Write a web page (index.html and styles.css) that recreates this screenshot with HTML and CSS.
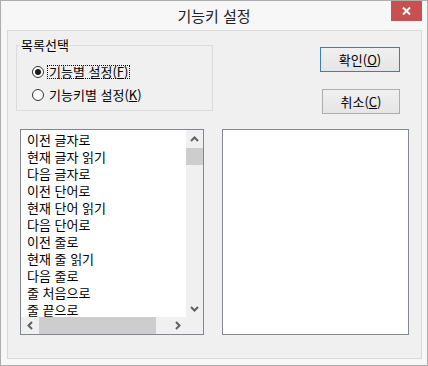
FILE: index.html
```html
<!DOCTYPE html>
<html lang="ko">
  <head>
    <meta charset="UTF-8" />
    <title>기능키 설정</title>
    <link rel="stylesheet" href="styles.css">
  </head>
  <body>
    <div class="window">
      <div class="titlebar">
        <span></span>
        <span class="title">기능키 설정</span>
        <button class="close">
          <svg width="9" height="8" viewBox="0 0 9 8">
            <path d="M1 0.5L8 7.5M8 0.5L1 7.5" stroke="#fff" stroke-width="2" />
          </svg>
        </button>
      </div>
      <div class="panel">
        <div class="top-row">
          <fieldset class="group">
            <legend>목록선택</legend>
            <label class="option">
              <span class="radio checked"></span>
              <span class="option-text focused">기능별 설정(<u>F</u>)</span>
            </label>
            <label class="option">
              <span class="radio"></span>
              <span class="option-text">기능키별 설정(<u>K</u>)</span>
            </label>
          </fieldset>
          <div class="buttons">
            <button class="btn default">확인(<u>O</u>)</button>
            <button class="btn cancel">취소(<u>C</u>)</button>
          </div>
        </div>
        <div class="bottom-row">
          <div class="listbox">
            <ul class="items">
              <li>이전 글자로</li>
              <li>현재 글자 읽기</li>
              <li>다음 글자로</li>
              <li>이전 단어로</li>
              <li>현재 단어 읽기</li>
              <li>다음 단어로</li>
              <li>이전 줄로</li>
              <li>현재 줄 읽기</li>
              <li>다음 줄로</li>
              <li>줄 처음으로</li>
              <li>줄 끝으로</li>
            </ul>
            <div class="vscroll">
              <span class="arrow">
                <svg width="9" height="6" viewBox="0 0 9 6">
                  <polyline points="1,5 4.5,1.5 8,5" fill="none" stroke="#606060" stroke-width="2" />
                </svg>
              </span>
              <span class="thumb"></span>
              <span class="track"></span>
              <span class="arrow">
                <svg width="9" height="6" viewBox="0 0 9 6">
                  <polyline points="1,1 4.5,4.5 8,1" fill="none" stroke="#606060" stroke-width="2" />
                </svg>
              </span>
            </div>
            <div class="hscroll">
              <span class="arrow">
                <svg width="6" height="9" viewBox="0 0 6 9">
                  <polyline points="5,1 1.5,4.5 5,8" fill="none" stroke="#606060" stroke-width="2" />
                </svg>
              </span>
              <span class="thumb"></span>
              <span class="track"></span>
              <span class="arrow">
                <svg width="6" height="9" viewBox="0 0 6 9">
                  <polyline points="1,1 4.5,4.5 1,8" fill="none" stroke="#606060" stroke-width="2" />
                </svg>
              </span>
            </div>
            <div class="corner"></div>
          </div>
          <div class="preview"></div>
        </div>
      </div>
    </div>
  </body>
</html>
```

FILE: styles.css
```css
* {
  box-sizing: border-box;
}

body {
  margin: 0;
  font-family: "Noto Sans CJK KR", "Noto Sans", sans-serif;
  font-size: 13px;
  color: #000;
}

.window {
  width: 428px;
  height: 366px;
  border: 1px solid #adadad;
  background: #f7f7f7;
  display: flex;
  flex-direction: column;
}

.titlebar {
  height: 29px;
  display: grid;
  grid-template-columns: 1fr auto 1fr;
  align-items: start;
}

.title {
  font-size: 15px;
  line-height: 29px;
  color: #222;
}

.close {
  justify-self: end;
  margin-right: 5px;
  width: 31px;
  height: 20px;
  border: 0;
  padding: 0;
  background: #c75050;
  display: flex;
  align-items: center;
  justify-content: center;
}

.panel {
  flex: 1;
  margin: 0 5px 6px 6px;
  border: 1px solid #d9d9d9;
  background: #f0f0f0;
}

.top-row {
  display: flex;
  justify-content: space-between;
  align-items: flex-start;
  padding: 7px 21px 0 8px;
}

.group {
  width: 197px;
  min-width: 0;
  margin: 0;
  padding: 12px 4px 7px 3px;
  border: 1px solid #dcdcdc;
}

.group legend {
  padding: 0 1px;
  line-height: 14px;
}

.option {
  display: flex;
  align-items: center;
  height: 16px;
  margin-left: 12px;
}

.option + .option {
  margin-top: 7px;
}

.radio {
  width: 12px;
  height: 12px;
  border-radius: 50%;
  border: 1px solid #333;
  background: #fff;
  margin-right: 3px;
  display: flex;
  align-items: center;
  justify-content: center;
}

.radio.checked::after {
  content: "";
  width: 6px;
  height: 6px;
  border-radius: 50%;
  background: #1a1a1a;
}

.option-text {
  line-height: 12px;
  padding: 0 1px;
  border: 1px dotted transparent;
}

.option-text.focused {
  border-color: #000;
}

.buttons {
  display: flex;
  flex-direction: column;
  align-items: flex-end;
  gap: 17px;
  margin-top: 9px;
}

.btn {
  width: 80px;
  height: 25px;
  padding: 0;
  font: inherit;
  color: #000;
  border: 1px solid #adadad;
  background: linear-gradient(#f0f0f0, #e5e5e5);
}

.btn.default {
  border-color: #3c7fb1;
}

.btn.cancel {
  width: 78px;
}

.bottom-row {
  display: flex;
  gap: 18px;
  margin: 15px 0 0 12px;
}

.listbox {
  width: 184px;
  height: 206px;
  border: 1px solid #828790;
  background: #fff;
  display: grid;
  grid-template-columns: 1fr 17px;
  grid-template-rows: 1fr 17px;
}

.items {
  list-style: none;
  margin: 0;
  padding: 1px 0 0 6px;
  overflow: hidden;
  line-height: 17px;
  white-space: nowrap;
}

.vscroll,
.hscroll,
.corner {
  background: #f0f0f0;
}

.vscroll {
  display: flex;
  flex-direction: column;
}

.hscroll {
  display: flex;
}

.arrow {
  flex: none;
  width: 17px;
  height: 17px;
  display: flex;
  align-items: center;
  justify-content: center;
}

.track {
  flex: 1;
}

.thumb {
  flex: none;
  background: #cdcdcd;
}

.vscroll .thumb {
  height: 17px;
  margin-top: 1px;
}

.hscroll .thumb {
  width: 117px;
  margin-left: 1px;
}

.preview {
  width: 187px;
  height: 206px;
  border: 1px solid #828790;
  background: #fff;
}
```
